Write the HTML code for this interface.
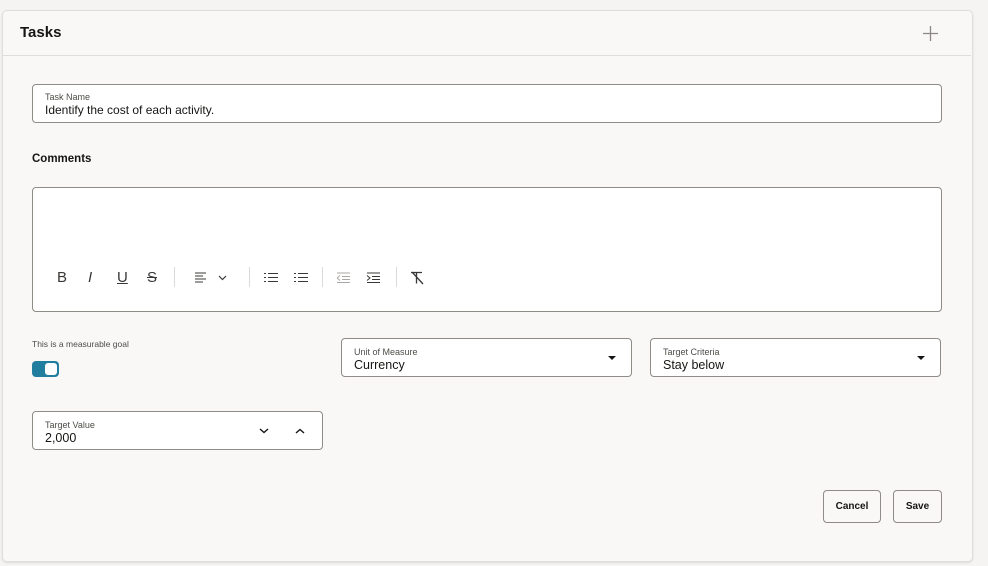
<!DOCTYPE html>
<html><head><style>
body{margin:0;width:988px;height:566px;background:#f5f4f2;font-family:"Liberation Sans",sans-serif;color:#161513;position:relative;overflow:hidden}
.a{position:absolute}
.card{left:2px;top:10px;width:969px;height:550px;background:#f9f8f6;border:1px solid #e0dedb;border-radius:5px;box-shadow:0 1px 2px rgba(0,0,0,.1)}
.f{position:absolute;background:#fff;border:1px solid #8f8b86;border-radius:4px;box-sizing:border-box}
.lb{position:absolute;left:12px;top:8px;font-size:9px;color:#4f4c48}
.v{position:absolute;left:12px;top:19px;font-size:12.5px}
.tri{position:absolute;width:0;height:0;border-left:4px solid transparent;border-right:4px solid transparent;border-top:4px solid #161513}
.btn{position:absolute;border:1px solid #8f8b86;border-radius:4px;box-sizing:border-box;font-size:10px;font-weight:bold;text-align:center;line-height:31px;background:#f9f8f6}
.ic{position:absolute;top:269px;font-size:15px;color:#3a3836}
.sep{position:absolute;top:267px;width:1px;height:20px;background:#dcdad6}
</style></head><body>
<div class="a card"></div>
<div class="a" style="left:20px;top:24px;font-size:15px;font-weight:bold">Tasks</div>
<div class="a" style="left:3px;top:55px;width:968px;height:1px;background:#e0dedb"></div>
<svg class="a" style="left:922px;top:25px" width="17" height="17"><path d="M8.5 1v15M1 8.5h15" stroke="#8a8784" stroke-width="1.3"/></svg>

<div class="f" style="left:32px;top:84px;width:910px;height:39px"><div class="lb" style="top:7px">Task Name</div><div class="v" style="top:18px;font-size:12px">Identify the cost of each activity.</div></div>
<div class="a" style="left:32px;top:153px;font-size:11.5px;font-weight:bold">Comments</div>
<div class="f" style="left:32px;top:187px;width:910px;height:125px"></div>
<div class="ic" style="left:57px">B</div>
<div class="ic" style="left:88px;font-style:italic">I</div>
<div class="ic" style="left:117px;text-decoration:underline">U</div>
<div class="ic" style="left:147px;text-decoration:line-through">S</div>
<div class="sep" style="left:174px"></div>
<svg class="a" style="left:195px;top:272px" width="36" height="12"><path d="M0 1h11M0 4h8M0 7h11M0 10h8" stroke="#3a3836"/><path d="M24 4l3.5 3.5L31 4" fill="none" stroke="#3a3836" stroke-width="1.2"/></svg>
<div class="sep" style="left:249px"></div>
<svg class="a" style="left:264px;top:272px" width="50" height="12"><path d="M0 1.5h2M4 1.5h10M0 5.5h2M4 5.5h10M0 9.5h2M4 9.5h10M30 1.5h2M34 1.5h10M30 5.5h2M34 5.5h10M30 9.5h2M34 9.5h10" stroke="#3a3836"/></svg>
<div class="sep" style="left:322px"></div>
<svg class="a" style="left:337px;top:272px" width="46" height="12"><path d="M0 1h13M5 4.5h8M5 7.5h8M0 10.5h13M3 3.5L0 6l3 2.5" fill="none" stroke="#aaa7a3"/><path d="M30 1h13M35 4.5h8M35 7.5h8M30 10.5h13M30 3.5L33 6l-3 2.5" fill="none" stroke="#3a3836"/></svg>
<div class="sep" style="left:396px"></div>
<svg class="a" style="left:410px;top:271px" width="15" height="14"><path d="M1 1.5h11M6.5 1.5v11M2 1l11 12" fill="none" stroke="#3a3836" stroke-width="1.3"/></svg>

<div class="a" style="left:32px;top:339px;font-size:8.5px;color:#4f4c48">This is a measurable goal</div>
<div class="a" style="left:32px;top:361px;width:27px;height:16px;border-radius:4px;background:#227e9e"></div>
<div class="a" style="left:45px;top:363px;width:12px;height:12px;border-radius:3px;background:#fff"></div>

<div class="f" style="left:341px;top:338px;width:291px;height:39px"><div class="lb">Unit of Measure</div><div class="v">Currency</div><div class="tri" style="left:266px;top:17px"></div></div>
<div class="f" style="left:650px;top:338px;width:291px;height:39px"><div class="lb">Target Criteria</div><div class="v">Stay below</div><div class="tri" style="left:266px;top:17px"></div></div>
<div class="f" style="left:32px;top:411px;width:291px;height:39px"><div class="lb">Target Value</div><div class="v">2,000</div>
<svg class="a" style="left:226px;top:15px" width="50" height="8"><path d="M1 2l4 3.5L9 2M37 6l4-3.5 4 3.5" fill="none" stroke="#161513" stroke-width="1.4"/></svg></div>

<div class="btn" style="left:823px;top:490px;width:58px;height:33px">Cancel</div>
<div class="btn" style="left:893px;top:490px;width:49px;height:33px">Save</div>
</body></html>
